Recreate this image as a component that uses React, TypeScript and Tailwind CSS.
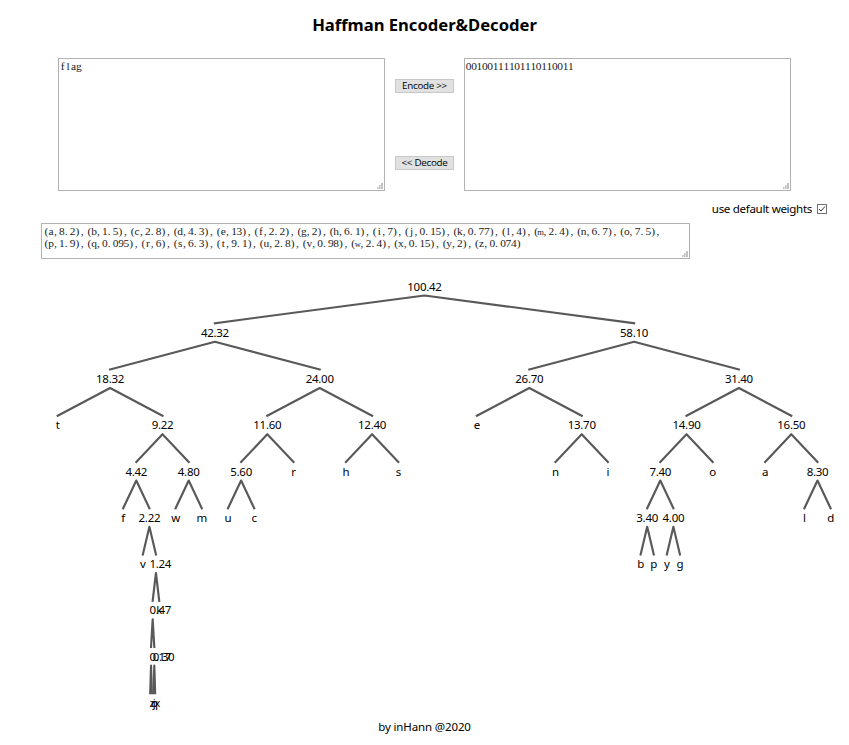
import React from "react";

type TreeNode = { label: string; left?: TreeNode; right?: TreeNode };

const n = (label: string, left?: TreeNode, right?: TreeNode): TreeNode => ({ label, left, right });

const tree = n(
  "100.42",
  n(
    "42.32",
    n(
      "18.32",
      n("t"),
      n(
        "9.22",
        n(
          "4.42",
          n("f"),
          n("2.22", n("v"), n("1.24", n("0.47", n("0.17", n("z"), n("q")), n("0.30", n("j"), n("x"))), n("k")))
        ),
        n("4.80", n("w"), n("m"))
      )
    ),
    n("24.00", n("11.60", n("5.60", n("u"), n("c")), n("r")), n("12.40", n("h"), n("s")))
  ),
  n(
    "58.10",
    n("26.70", n("e"), n("13.70", n("n"), n("i"))),
    n(
      "31.40",
      n("14.90", n("7.40", n("3.40", n("b"), n("p")), n("4.00", n("y"), n("g"))), n("o")),
      n("16.50", n("a"), n("8.30", n("l"), n("d")))
    )
  )
);

const LEVEL = 46.25;
const SANS = "font-['Noto_Sans','Open_Sans',sans-serif]";

// Labels wider than their cell overflow to the right, the others are centred.
function Branch({ node, x, width, depth }: { node: TreeNode; x: number; width: number; depth: number }) {
  const y = depth * LEVEL;
  const cx = x + width / 2;
  const textWidth = node.label.length > 1 ? (node.label.length - 1) * 6.3 + 3 : 5.5;
  const overflow = textWidth > width;
  return (
    <>
      <text x={overflow ? x : cx} y={y + 20.7} textAnchor={overflow ? "start" : "middle"} className="fill-black">
        {node.label}
      </text>
      {node.left && node.right && (
        <>
          <path
            d={`M${cx - width / 4} ${y + 53.2}L${cx} ${y + 25.5}L${cx + width / 4} ${y + 53.2}`}
            fill="none"
            stroke="#595959"
            strokeWidth="2.15"
            strokeLinecap="square"
            strokeLinejoin="round"
          />
          <Branch node={node.left} x={x} width={width / 2} depth={depth + 1} />
          <Branch node={node.right} x={cx} width={width / 2} depth={depth + 1} />
        </>
      )}
    </>
  );
}

const CELL = 5.38;

// Fixed-pitch serif line: every glyph sits in a cell of equal width.
function MonoLine({ text, y }: { text: string; y: number }) {
  const widths: Record<string, number> = {
    "(": 3.8, ")": 3.8, ",": 2.9, ".": 2.9, i: 3.2, j: 3.2, l: 3.2, f: 3.8, t: 3.2,
    r: 3.8, s: 4.5, a: 5.1, c: 5.1, e: 5.1, z: 5.1, m: 6.6, w: 6.1,
  };
  const xs = text.split("").map((ch, i) => {
    const w = widths[ch] ?? 5.7;
    const pad = ch === "(" ? CELL - w : ch === ")" ? 0.2 : ch === "," || ch === "." ? 0.2 : (CELL - w) / 2;
    return (1 + i * CELL + pad).toFixed(2);
  });
  const parts = text.split(/([mw])/);
  let at = 0;
  return (
    <text y={y} className="fill-[#222222]">
      {parts.map((part, i) => {
        const start = at;
        at += part.length;
        return (
          <tspan key={i} x={xs.slice(start, at).join(" ")} className={part === "m" || part === "w" ? "text-[8.5px]" : ""}>
            {part}
          </tspan>
        );
      })}
    </text>
  );
}

function TextBox({ lines, size, top }: { lines: string[]; size: string; top: number }) {
  return (
    <div className={`relative shrink-0 border border-[#b2b2b2] bg-white ${size}`}>
      <svg className="block h-full w-full font-['Liberation_Serif',serif] text-[11.4px]">
        {lines.map((line, i) => (
          <MonoLine key={i} text={line} y={top + i * 12.6} />
        ))}
      </svg>
      <svg viewBox="0 0 6 6" className="absolute right-px bottom-px size-[6px]" fill="#c2c2c2">
        <path d="M4 0h2v6h-2zM2 2h1.6v4h-1.6zM0 4h1.6v2h-1.6z" />
      </svg>
    </div>
  );
}

function PushButton({ children }: { children: React.ReactNode }) {
  return (
    <button className="flex h-[14px] w-[59px] items-center justify-center border border-[#c8c8c8] bg-[#e1e1e1] font-['Open_Sans',sans-serif] text-[9.8px] leading-none tracking-[-0.26px] whitespace-nowrap text-black">
      {children}
    </button>
  );
}

export default function App() {
  return (
    <main className={`flex h-[745px] w-[849px] flex-col overflow-hidden bg-white text-black ${SANS}`}>
      <h1 className="pt-[12px] text-center text-[16.6px] leading-[25px] font-bold">Haffman Encoder&amp;Decoder</h1>
      <section className="mt-[21px] flex pl-[58px]">
        <TextBox lines={["flag"]} size="h-[133px] w-[327px]" top={11.4} />
        <div className="flex w-[79px] flex-col items-center gap-[63px] pt-[21px]">
          <PushButton>Encode &gt;&gt;</PushButton>
          <PushButton>&lt;&lt; Decode</PushButton>
        </div>
        <TextBox lines={["00100111101110110011"]} size="h-[133px] w-[327px]" top={11.4} />
      </section>
      <label className="mt-[8px] flex h-[19px] items-center justify-end gap-[5px] pr-[22px] text-[11.6px] leading-[18px]">
        <span className="tracking-[-0.33px]">use default weights</span>
        <span className="flex size-[10px] items-center justify-center border border-[#707070]">
          <svg viewBox="0 0 8 8" className="size-[8px]" fill="none" stroke="#333333" strokeWidth="1">
            <path d="M1 4l2 2 4-4.5" />
          </svg>
        </span>
      </label>
      <section className="mt-[5px] pl-[41px]">
        <TextBox
          lines={[
            "(a,8.2),(b,1.5),(c,2.8),(d,4.3),(e,13),(f,2.2),(g,2),(h,6.1),(i,7),(j,0.15),(k,0.77),(l,4),(m,2.4),(n,6.7),(o,7.5),",
            "(p,1.9),(q,0.095),(r,6),(s,6.3),(t,9.1),(u,2.8),(v,0.98),(w,2.4),(x,0.15),(y,2),(z,0.074)",
          ]}
          size="h-[36px] w-[649px]"
          top={10.5}
        />
      </section>
      <svg className="mt-[11px] block h-[448px] w-[849px] shrink-0 text-[11.5px] tracking-[-0.27px]">
        <Branch node={tree} x={5.3} width={838.4} depth={0} />
      </svg>
      <footer className="text-center text-[11.5px] leading-[18px] tracking-[-0.13px]">by inHann @2020</footer>
    </main>
  );
}
